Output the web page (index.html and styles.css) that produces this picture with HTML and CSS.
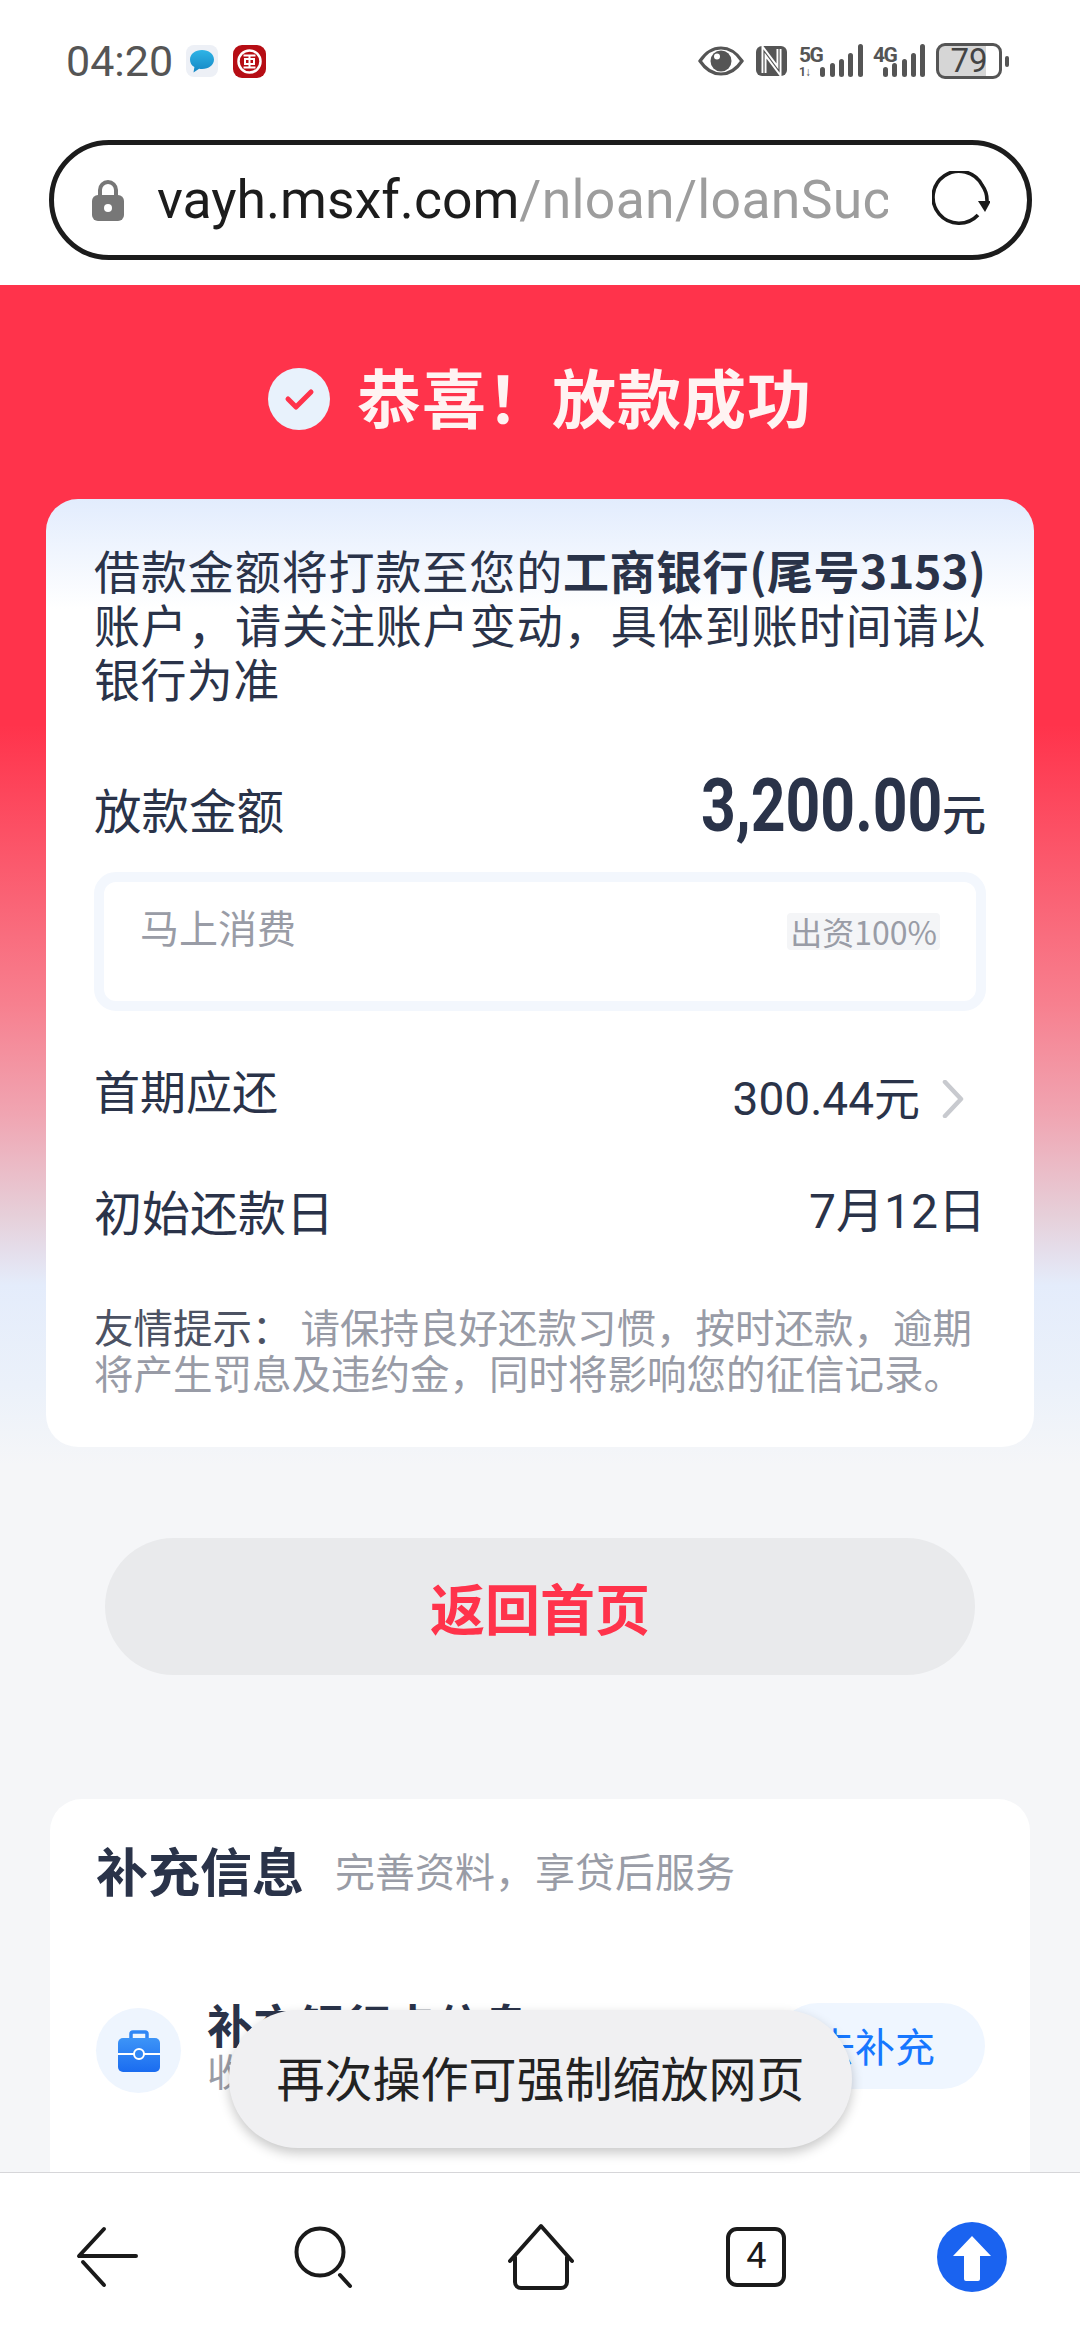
FILE: index.html
```html
<!DOCTYPE html>
<html lang="zh-CN">
<head>
<meta charset="utf-8">
<title>放款成功</title>
<link rel="stylesheet" href="styles.css">
</head>
<body>
<div class="screen">
  <header class="status">
    <div class="status-left">
      <span class="time">04:20</span>
      <svg class="app-icon" viewBox="0 0 32 32"><rect width="32" height="32" rx="8" fill="#edf0f6"/><defs><linearGradient id="msg" x1="0" y1="0" x2="0" y2="1"><stop offset="0" stop-color="#2fb4e6"/><stop offset="1" stop-color="#1587c4"/></linearGradient></defs><path d="M16 5c6.800 0 12 4 12 9.500S22.800 24 16 24c-1 0-2-.1-2.900-.3L7.500 27.500l.9-5.400C5.500 20.500 4 17.800 4 14.500 4 9 9.200 5 16 5z" fill="url(#msg)"/></svg>
      <svg class="app-icon bank" viewBox="0 0 33 33"><rect width="33" height="33" rx="9" fill="#b60d14"/><circle cx="16.500" cy="16.500" r="11" fill="none" stroke="#fff" stroke-width="2.500"/><path d="M10.500 10.500h12M10.500 22.500h12M16.500 10.500v12M12 14h9v5h-9z" fill="none" stroke="#fff" stroke-width="2"/></svg>
    </div>
    <div class="status-right">
      <svg class="eye" viewBox="0 0 46 30"><path d="M2 15C8 6 15 2 23 2s15 4 21 13c-6 9-13 13-21 13S8 24 2 15z" fill="none" stroke="#555" stroke-width="3.200"/><circle cx="23" cy="15" r="10.500" fill="#555"/><circle cx="19" cy="10.500" r="3" fill="#fff"/></svg>
      <svg class="nfc" viewBox="0 0 31 30"><rect width="31" height="30" rx="6" fill="#555"/><path d="M8 27V5l15 20V3" fill="none" stroke="#fff" stroke-width="5"/><path d="M8 27V5l15 20V3" fill="none" stroke="#555" stroke-width="1.200"/></svg>
      <div class="signal">
        <div class="net"><span class="net-name">5G</span><span class="net-arrows">1↓</span></div>
        <svg class="bars" viewBox="0 0 44 34"><rect x="0" y="23" width="5" height="10" rx="2.500"/><rect x="10" y="19" width="5" height="14" rx="2.500"/><rect x="19" y="15" width="5" height="18" rx="2.500"/><rect x="28" y="9" width="5" height="24" rx="2.500"/><rect x="38" y="0" width="5" height="33" rx="2.500"/></svg>
      </div>
      <div class="signal">
        <div class="net net-short"><span class="net-name">4G</span></div>
        <svg class="bars" viewBox="0 0 44 34"><rect x="0" y="23" width="5" height="10" rx="2.500"/><rect x="9" y="19" width="5" height="14" rx="2.500"/><rect x="19" y="15" width="5" height="18" rx="2.500"/><rect x="28" y="9" width="5" height="24" rx="2.500"/><rect x="37" y="0" width="5" height="33" rx="2.500"/></svg>
      </div>
      <div class="battery-wrap">
        <div class="battery"><span class="battery-num">79</span></div>
        <span class="battery-nub"></span>
      </div>
    </div>
  </header>

  <div class="address-wrap">
    <div class="address">
      <svg class="lock" viewBox="0 0 32 41"><path d="M8 19v-9a8 8 0 0 1 16 0v9" fill="none" stroke="#777" stroke-width="4"/><rect y="15" width="32" height="26" rx="6" fill="#777"/><circle cx="16" cy="28" r="4" fill="#fff"/></svg>
      <div class="url"><span class="url-host">vayh.msxf.com</span>/nloan/loanSucc</div>
      <svg class="reload" viewBox="0 0 58 58"><path d="M46 44A26 26 0 1 1 50 14 26 26 0 0 1 55 30" fill="none" stroke="#1a1a1a" stroke-width="3.600"/><path d="M46 30h13l-6 11z" fill="#1a1a1a"/></svg>
    </div>
  </div>

  <main class="content">
    <div class="hero">
      <svg class="hero-check" viewBox="0 0 62 62"><circle cx="31" cy="31" r="31" fill="#e8f2fc"/><path d="M20 31l8 8 15-15" fill="none" stroke="#ff334b" stroke-width="5" stroke-linecap="round" stroke-linejoin="round"/></svg>
      <h1 class="hero-title">恭喜！放款成功</h1>
    </div>

    <section class="card">
      <p class="notice">借款金额将打款至您的<strong>工商银行(尾号3153)</strong>账户，请关注账户变动，具体到账时间请以银行为准</p>

      <div class="row amount-row">
        <span class="label label-lg">放款金额</span>
        <span class="amount"><span class="amount-num">3,200.00</span><span class="amount-unit">元</span></span>
      </div>

      <div class="fund-box">
        <span class="fund-name">马上消费</span>
        <span class="fund-tag">出资100%</span>
      </div>

      <div class="row first-row">
        <span class="label">首期应还</span>
        <span class="value value-link">300.44元<svg class="chevron" viewBox="0 0 24 38"><path d="M4 2l16 17L4 36" fill="none" stroke="#c8cacf" stroke-width="4.500" stroke-linecap="round" stroke-linejoin="round"/></svg></span>
      </div>

      <div class="row date-row">
        <span class="label label-xl">初始还款日</span>
        <span class="value value-lg">7月12日</span>
      </div>

      <p class="hint"><span class="hint-head">友情提示：</span>请保持良好还款习惯，按时还款，逾期将产生罚息及违约金，同时将影响您的征信记录。</p>
    </section>

    <div class="home-btn">返回首页</div>

    <section class="card extra">
      <div class="extra-head">
        <h2 class="extra-title">补充信息</h2>
        <span class="extra-sub">完善资料，享贷后服务</span>
      </div>
      <div class="extra-item">
        <div class="case-circle">
          <svg class="case" viewBox="0 0 42 42"><defs><linearGradient id="cs" x1="0" y1="0" x2="0" y2="1"><stop offset="0" stop-color="#3d94f7"/><stop offset="1" stop-color="#1a6cf0"/></linearGradient></defs><path d="M13 9V4a2 2 0 0 1 2-2h12a2 2 0 0 1 2 2v5" fill="none" stroke="#2f86f5" stroke-width="3.500"/><rect y="8" width="42" height="34" rx="5" fill="url(#cs)"/><path d="M0 24h42" stroke="#fff" stroke-width="2"/><circle cx="21" cy="24" r="5" fill="#2f86f5" stroke="#fff" stroke-width="2"/></svg>
        </div>
        <div class="item-text">
          <div class="item-title">补充银行卡信息</div>
          <div class="item-sub">收款账户信息</div>
        </div>
        <div class="item-btn">去补充</div>
      </div>
    </section>

    <div class="toast">再次操作可强制缩放网页</div>
  </main>

  <nav class="bottom-nav">
    <svg class="nav-icon" viewBox="0 0 70 70"><path d="M31 7L6 34h57M10 40l21 23" fill="none" stroke="#1a1a1a" stroke-width="4" stroke-linecap="round" stroke-linejoin="round"/></svg>
    <svg class="nav-icon" viewBox="0 0 70 70"><circle cx="32" cy="30" r="23.500" fill="none" stroke="#1a1a1a" stroke-width="4"/><path d="M52 53l10 11" fill="none" stroke="#1a1a1a" stroke-width="4" stroke-linecap="round"/></svg>
    <svg class="nav-icon nav-home" viewBox="0 0 70 70"><path d="M4 39L35 4l31 35M9 35v25a6 6 0 0 0 6 6h40a6 6 0 0 0 6-6V35" fill="none" stroke="#1a1a1a" stroke-width="4" stroke-linecap="round" stroke-linejoin="round"/></svg>
    <div class="tabs">4</div>
    <svg class="nav-icon" viewBox="0 0 70 70"><circle cx="35" cy="35" r="35" fill="#1a63f0"/><path d="M35 14L54 34H43V57a2 2 0 0 1-2 2H29a2 2 0 0 1-2-2V34H16z" fill="#fff"/></svg>
  </nav>
</div>
</body>
</html>
```

FILE: styles.css
```css
* { box-sizing: border-box; }
html, body { margin: 0; padding: 0; }
body {
  width: 1080px;
  height: 2340px;
  overflow: hidden;
  background: #fff;
  font-family: "Noto Sans CJK SC", "Noto Sans", sans-serif;
}
h1, h2, p { margin: 0; font-weight: inherit; }

.screen {
  position: relative;
  width: 1080px;
  height: 2340px;
  display: flex;
  flex-direction: column;
  overflow: hidden;
}

/* status bar */
.status {
  height: 125px;
  padding: 0 71px 3px 66px;
  display: flex;
  align-items: center;
  justify-content: space-between;
  background: #fff;
  flex: none;
}
.status-left { display: flex; align-items: center; }
.time {
  font-family: Roboto, sans-serif;
  font-size: 43px;
  color: #555;
  line-height: 48px;
  margin-right: 13px;
}
.app-icon { width: 32px; height: 32px; }
.bank { width: 33px; height: 33px; margin-left: 15px; }
.status-right { display: flex; align-items: center; }
.eye { width: 46px; height: 30px; margin-right: 12px; }
.nfc { width: 31px; height: 30px; margin-right: 12px; }
.signal { display: flex; align-items: flex-end; height: 34px; }
.signal + .signal { margin-left: 9px; }
.net {
  display: flex;
  flex-direction: column;
  width: 21px;
  height: 34px;
}
.net-short { width: 10px; }
.net-name {
  font-family: Roboto, sans-serif;
  font-weight: 700;
  font-size: 21px;
  line-height: 22px;
  letter-spacing: -1.500px;
  color: #555;
  white-space: nowrap;
}
.net-arrows {
  font-family: Roboto, sans-serif;
  font-weight: 700;
  font-size: 12px;
  line-height: 12px;
  letter-spacing: -1px;
  color: #555;
}
.bars { width: 44px; height: 34px; fill: #555; }
.battery-wrap { display: flex; align-items: center; margin-left: 9px; }
.battery {
  width: 66px;
  height: 36px;
  border: 3px solid #555;
  border-radius: 9px;
  background: linear-gradient(90deg, #d6d6d6 78%, #fff 78%);
  display: flex;
  align-items: center;
  justify-content: center;
}
.battery-num {
  font-family: Roboto, sans-serif;
  font-size: 33px;
  line-height: 30px;
  color: #444;
}
.battery-nub {
  width: 4px;
  height: 11px;
  margin-left: 3px;
  border-radius: 2px;
  background: #555;
}

/* address bar */
.address-wrap { height: 160px; padding: 15px 48px 0 49px; flex: none; background: #fff; }
.address {
  height: 120px;
  border: 5px solid #1c1c1c;
  border-radius: 60px;
  padding: 0 37px 0 38px;
  display: flex;
  align-items: center;
}
.lock { width: 32px; height: 41px; flex: none; }
.url {
  width: 731px;
  margin-left: 33px;
  overflow: hidden;
  white-space: nowrap;
  font-family: Roboto, sans-serif;
  font-size: 53.500px;
  line-height: 70px;
  letter-spacing: .3px;
  color: #9d9d9d;
}
.url-host { color: #1c1c1c; letter-spacing: 0; }
.reload { width: 58px; height: 58px; margin-left: auto; flex: none; }

/* content */
.content {
  flex: 1;
  min-height: 0;
  overflow: hidden;
  background: linear-gradient(180deg,
    #ff334b 0, #ff334b 440px,
    #f7808f 720px, #f0a5b2 830px,
    #e6cfd9 930px, #e4ecfb 1000px,
    #ebf1fa 1100px, #f5f6f8 1180px);
}
.hero {
  height: 214px;
  padding-top: 6px;
  display: flex;
  align-items: center;
  justify-content: center;
  gap: 27px;
}
.hero-check { width: 62px; height: 62px; margin-top: 8px; }
.hero-title {
  font-size: 64px;
  line-height: 80px;
  font-weight: 700;
  color: #fff3f2;
  letter-spacing: 1px;
}

.card {
  margin: 0 46px;
  padding: 43px 48px 52px;
  border-radius: 32px;
  background: linear-gradient(180deg, #e2ecfd 0, #fff 110px);
  color: #2a3349;
}
.notice {
  font-size: 46px;
  line-height: 54px;
  letter-spacing: .4px;
  text-align: justify;
}
.notice strong { font-weight: 700; letter-spacing: 0; }
.row {
  display: flex;
  align-items: center;
  justify-content: space-between;
  height: 54px;
}
.label { font-size: 46px; line-height: 54px; }
.label-lg { font-size: 47.500px; }
.label-xl { font-size: 48px; }
.value {
  font-size: 46px;
  line-height: 54px;
  font-family: Roboto, "Noto Sans CJK SC", sans-serif;
}
.value-lg { font-size: 48px; }
.first-row .label { margin-top: -10px; }
.value-link { display: flex; align-items: center; margin-top: 10px; padding-right: 21px; }
.chevron { width: 24px; height: 38px; margin-left: 21px; }
.amount-row { height: 80px; margin-top: 65px; }
.amount { display: flex; align-items: baseline; line-height: 80px; }
.amount-num {
  display: inline-block;
  font-family: Roboto, sans-serif;
  font-weight: 700;
  font-size: 74px;
  transform: scaleX(.82);
  transform-origin: right center;
}
.amount-unit { font-size: 44px; font-weight: 500; }
.fund-box {
  height: 139px;
  margin-top: 23px;
  padding: 22px 36px 0 36px;
  border: 10px solid #f3f7fd;
  border-radius: 22px;
  background: #fff;
  display: flex;
  align-items: flex-start;
  justify-content: space-between;
}
.fund-name { font-size: 39px; line-height: 44px; color: #999ca6; }
.fund-tag {
  margin-top: 9px;
  padding: 0 3px;
  height: 37px;
  font-size: 32px;
  line-height: 37px;
  color: #999ca6;
  background: #f4f5f7;
  border-radius: 4px;
}
.first-row { margin-top: 56px; }
.date-row { margin-top: 64px; }
.date-row .label { margin-top: -4px; }
.hint {
  margin-top: 64px;
  font-size: 39.500px;
  line-height: 46px;
  color: #989ba6;
}
.hint-head { color: #4c5263; margin-right: 9px; }

.home-btn {
  margin: 91px 105px 0;
  height: 137px;
  border-radius: 69px;
  background: #e9eaec;
  color: #ff334b;
  font-size: 55px;
  font-weight: 700;
  line-height: 136px;
  text-align: center;
}

.extra {
  margin: 124px 50px 0;
  padding: 41px 45px 0 46px;
  height: 500px;
  background: #fff;
}
.extra-head { display: flex; align-items: center; height: 60px; }
.extra-title { font-size: 52px; line-height: 60px; font-weight: 700; }
.extra-sub { margin-left: 31px; font-size: 40px; color: #999ca6; }
.extra-item { display: flex; align-items: flex-start; margin-top: 103px; }
.case-circle {
  width: 85px;
  height: 85px;
  margin-top: 5px;
  border-radius: 50%;
  background: #eef5fe;
  display: flex;
  align-items: center;
  justify-content: center;
  flex: none;
}
.case { width: 42px; height: 42px; }
.item-text { margin-left: 26px; flex: 1; margin-top: -5px; }
.item-title { font-size: 46px; line-height: 50px; font-weight: 700; }
.item-sub { font-size: 38px; line-height: 44px; color: #999ca6; }
.item-btn {
  width: 210px;
  height: 86px;
  padding-right: 10px;
  border-radius: 43px;
  background: #eff6ff;
  color: #1677ff;
  font-size: 40px;
  line-height: 84px;
  text-align: center;
}

.toast {
  position: absolute;
  left: 229px;
  top: 2010px;
  width: 623px;
  height: 138px;
  border-radius: 69px;
  background: #f0f0f2;
  box-shadow: 0 5px 12px rgba(0, 0, 0, .22);
  color: #222;
  font-size: 48px;
  line-height: 132px;
  text-align: center;
}

/* bottom nav */
.bottom-nav {
  height: 168px;
  flex: none;
  padding: 0 73px;
  border-top: 1px solid #d6d6d9;
  background: #fff;
  display: flex;
  align-items: center;
  justify-content: space-between;
  position: relative;
}
.nav-icon { width: 70px; height: 70px; flex: none; }
.nav-home { margin-left: 3px; }
.tabs {
  width: 60px;
  height: 60px;
  margin: 0 6px;
  border: 4px solid #1a1a1a;
  border-radius: 11px;
  font-family: Roboto, sans-serif;
  font-size: 36px;
  font-weight: 400;
  line-height: 50px;
  text-align: center;
  color: #1a1a1a;
}
```
